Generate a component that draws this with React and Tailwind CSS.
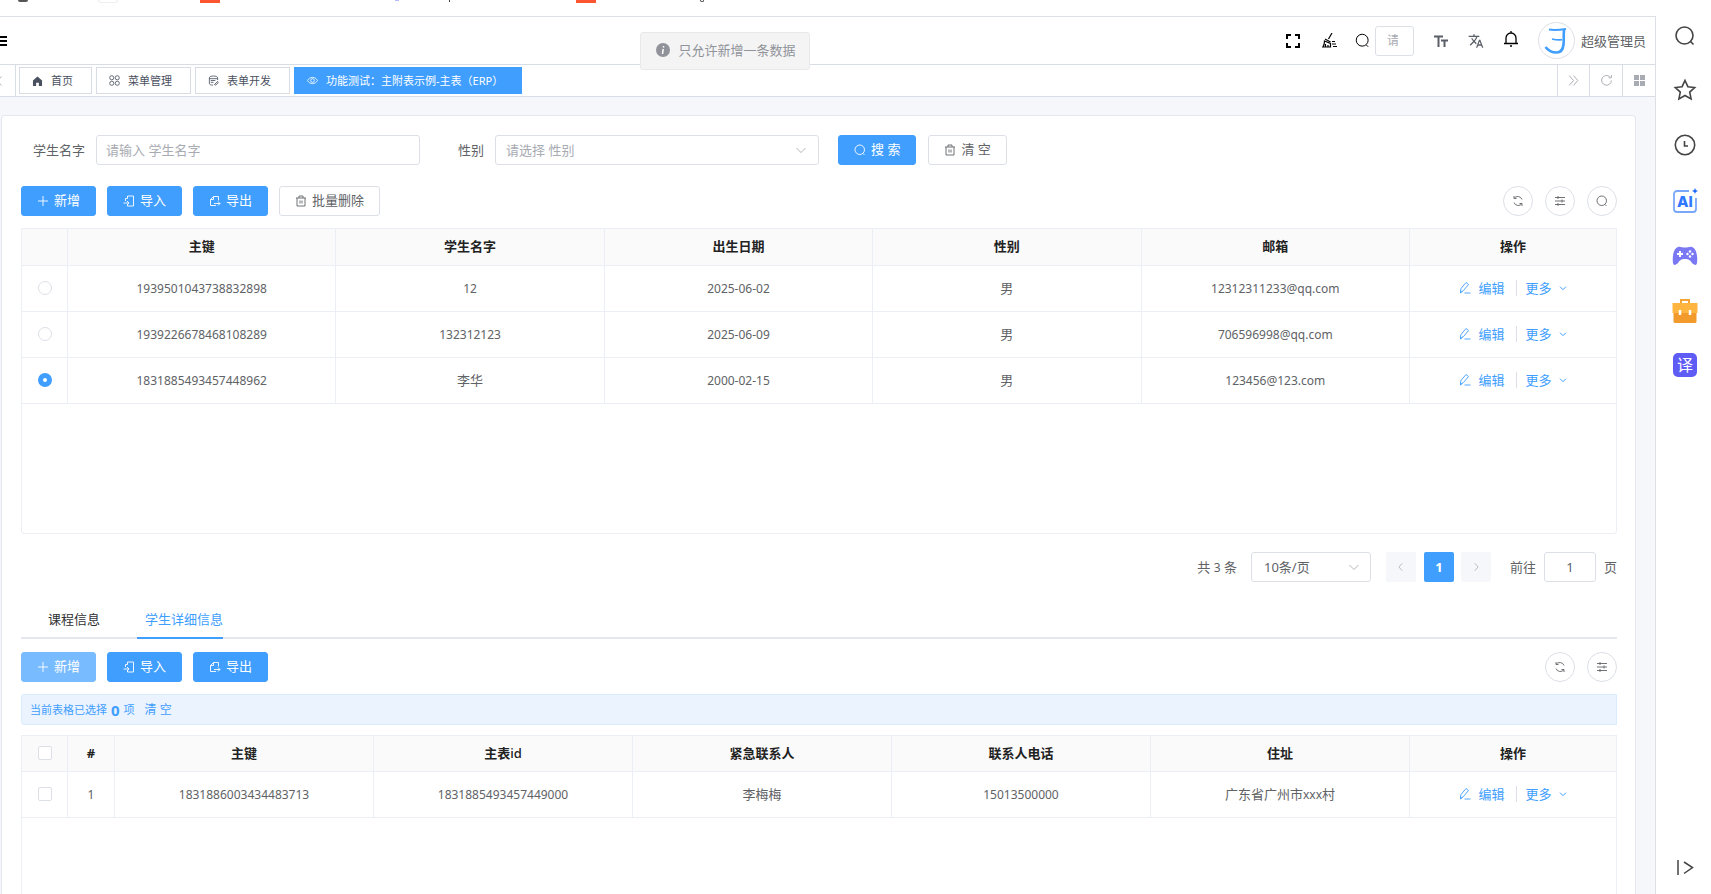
import React, { useState } from "react";

const students = [
  { id: "1939501043738832898", name: "12", birth: "2025-06-02", sex: "男", email: "12312311233@qq.com" },
  { id: "1939226678468108289", name: "132312123", birth: "2025-06-09", sex: "男", email: "706596998@qq.com" },
  { id: "1831885493457448962", name: "李华", birth: "2000-02-15", sex: "男", email: "123456@123.com" },
];

const contacts = [
  { id: "1831886003434483713", mainId: "1831885493457449000", contact: "李梅梅", phone: "15013500000", address: "广东省广州市xxx村" },
];

// element style outline icons, all on a 24 grid
const paths = {
  plus: <path d="M12 2v20M2 12h20" />,
  import: <path d="M9 7V2h12v20H9v-3M1 16h10M8 12l4 4-4 4M9 7H5v5" />,
  export: <path d="M19 11V3H9L3 9v12h11M9 3v6H3M10 17h12M18 13l4 4-4 4" />,
  trash: <path d="M2 6h20M8 6V2h8v4M4 6v16h16V6M10 11v6M14 11v6" />,
  search: <path d="M18 19l3 3M11.500 21a9.500 9.500 0 1 1 0-19 9.500 9.500 0 0 1 0 19z" />,
  refresh: <path d="M20 9a9 9 0 0 0-16-2M4 2v5h5M4 15a9 9 0 0 0 16 2M20 22v-5h-5" />,
  reload: <path d="M21 12a9 9 0 1 1-3-7M21 2v5h-5" />,
  sliders: <path d="M2 5h20M2 12h20M2 19h20M8 2v6M16 9v6M8 16v6" />,
  down: <path d="M3 8l9 9 9-9" />,
  left: <path d="M15 3l-8 9 8 9" />,
  right: <path d="M9 3l8 9-8 9" />,
  double: <path d="M4 3l8 9-8 9M12 3l8 9-8 9" />,
  edit: <path d="M5 19l-2-1 1-5L14 1l5 4L9 17zM3 18v4l4-3M11 22h12" />,
  eye: <path d="M1 12c5-9 17-9 22 0-5 9-17 9-22 0zM12 16a4 4 0 1 0 0-8 4 4 0 0 0 0 8z" />,
  form: <path d="M21 11V6c0-5-18-5-18 0v12c0 3 3 4 8 4M3 8h18M6 12h10M6 16h6M14 21l7-7 1 3-5 5z" />,
  menu: (
    <>
      <circle cx="6" cy="6" r="4.500" />
      <circle cx="18" cy="6" r="4.500" />
      <circle cx="6" cy="18" r="4.500" />
      <circle cx="18" cy="18" r="4.500" />
    </>
  ),
};

function Icon({ name, size = 12, width = 1.8, className = "" }) {
  return (
    <svg width={size} height={size} viewBox="0 0 24 24" fill="none" stroke="currentColor" strokeWidth={width} className={"shrink-0 " + className}>
      {paths[name]}
    </svg>
  );
}

function Button({ icon, children, primary, disabled }) {
  const tone = primary
    ? disabled
      ? "bg-[#79bbff] border-[#79bbff] text-white"
      : "bg-[#409eff] border-[#409eff] text-white"
    : "bg-white border-[#dcdfe6] text-[#606266]";
  return (
    <button disabled={disabled} className={"flex h-[30px] items-center gap-[5px] whitespace-nowrap rounded-[3px] border px-[15px] " + tone}>
      <Icon name={icon} />
      <span className="pb-0.5">{children}</span>
    </button>
  );
}

function RoundButton({ icon, label }) {
  return (
    <button aria-label={label} className="flex size-[30px] items-center justify-center rounded-full border border-[#dcdfe6] text-[#606266]">
      <Icon name={icon} />
    </button>
  );
}

function Th({ children }) {
  return <th className="border-b border-r border-[#ebeef5] pb-0.5 font-bold text-[#222222] last:border-r-0">{children}</th>;
}

function Td({ children }) {
  return <td className="border-b border-r border-[#ebeef5] pb-0.5 last:border-r-0">{children}</td>;
}

// latin and digits run a size smaller than the chinese text
function Num({ children }) {
  return <span className="text-xs">{children}</span>;
}

function Actions() {
  return (
    <div className="flex items-center justify-center text-[#409eff]">
      <button className="flex items-center gap-[7px]">
        <Icon name="edit" />
        编辑
      </button>
      <span className="ml-[11px] mr-[9px] h-4 w-px bg-[#dcdfe6]" />
      <button className="flex items-center gap-[7px]">
        更多
        <Icon name="down" size={8} width={3} />
      </button>
    </div>
  );
}

function TopBar() {
  return (
    <header className="flex h-12 shrink-0 items-center justify-between border-b border-[#d8dce5] bg-white pr-[9px]">
      <button aria-label="菜单" className="flex w-[7px] flex-col gap-[2px]">
        <span className="h-[2px] bg-black" />
        <span className="h-[2px] bg-black" />
        <span className="h-[2px] bg-black" />
      </button>
      <div className="flex items-center text-black">
        <button aria-label="全屏">
          <svg width="14" height="14" viewBox="0 0 14 14" fill="none" stroke="currentColor" strokeWidth="2">
            <path d="M1 5V1h4M9 1h4v4M13 9v4H9M5 13H1V9" />
          </svg>
        </button>
        <button aria-label="清理缓存" className="ml-[22px]">
          <svg width="15" height="15" viewBox="0 0 15 15" fill="none" stroke="currentColor" strokeWidth="1.200">
            <path d="M10 0L6.500 6M3 6l5.500 3" />
            <path d="M2.500 8l6 2.500V14H.8c1.200-1.500 1.700-3.500 1.700-6zM3.500 11v3M6 12v2M10 8.500h3M10 11h4M11 13.500h4" />
          </svg>
        </button>
        <label htmlFor="menu-search" className="ml-[18px]">
          <Icon name="search" size={15} width={1.6} />
        </label>
        <input id="menu-search" placeholder="请输入菜单" className="ml-[5px] h-[30px] w-[39px] rounded-[3px] border border-[#dcdfe6] pl-[11px] pr-[15px] text-xs placeholder:text-[#a8abb2]" />
        <button aria-label="字体大小" className="ml-5 text-[#5a5e66]">
          <svg width="14" height="12" viewBox="0 0 14 12" fill="none" stroke="currentColor" strokeWidth="2">
            <path d="M0 1.500h9M4.500 1.500V12M7 5.500h7M10.500 5.500V12" />
          </svg>
        </button>
        <button aria-label="语言" className="ml-5 text-[#5a5e66]">
          <svg width="16" height="16" viewBox="0 0 24 24" fill="currentColor">
            <path d="M12.870 15.070l-2.540-2.510.03-.03A17.520 17.520 0 0 0 14.070 6H17V4h-7V2H8v2H1v2h11.170C11.500 7.920 10.440 9.750 9 11.350 8.070 10.320 7.300 9.190 6.690 8h-2c.73 1.630 1.730 3.170 2.980 4.560l-5.090 5.020L4 19l5-5 3.110 3.110.76-2.040zM18.500 10h-2L12 22h2l1.120-3h4.750L21 22h2l-4.500-12zm-2.620 7l1.620-4.330L19.120 17h-3.240z" />
          </svg>
        </button>
        <button aria-label="通知" className="ml-5 pb-1">
          <svg width="14" height="16" viewBox="0 0 14 16" fill="none" stroke="currentColor" strokeWidth="1.300">
            <path d="M0 12.500h14M2 12.500V7a5 5 0 0 1 10 0v5.500M7 0v2M6 15h2" />
          </svg>
        </button>
        <button className="ml-5 flex items-center gap-1.5 text-[#606266]">
          <svg width="37" height="37" viewBox="0 0 37 37" fill="none">
            <circle cx="18.500" cy="18.500" r="18" stroke="#dcdfe6" />
            <path d="M11 7.500c5 1 10 .5 17-.5" stroke="#409eff" strokeWidth="2" />
            <path d="M14 17c3 .8 6 1 10 .8" stroke="#409eff" strokeWidth="1.600" />
            <path d="M26 7.500c-.5 6 0 10-.5 15-.5 5-3 8-7 8s-8-1.500-11-5.500" stroke="#409eff" strokeWidth="2.600" />
          </svg>
          超级管理员
        </button>
      </div>
    </header>
  );
}

function PageTab({ icon, active, children }) {
  const tone = active ? "border-[#409eff] bg-[#409eff] text-white pr-[18px]" : "border-[#d8dce5] bg-white text-[#495060] pr-[18px]";
  return (
    <a href="#" className={"flex h-[27px] items-center gap-2 whitespace-nowrap border pl-3 text-[11px] " + tone}>
      {icon}
      {children}
    </a>
  );
}

function TagsBar() {
  return (
    <nav className="flex h-8 shrink-0 items-stretch border-b border-[#d8dce5] bg-white text-[#a8abb2]">
      <button aria-label="向左" className="flex w-4 items-center border-r border-[#d8dce5]">
        <Icon name="left" size={12} className="-ml-1.5" />
      </button>
      <div className="flex flex-1 items-center gap-1 pl-[3px]">
        <PageTab
          icon={
            <svg width="11" height="10" viewBox="0 0 11 11" fill="currentColor">
              <path d="M5.500 0.500L10.500 5v6H7V7.500H4V11H.5V5z" />
            </svg>
          }
        >
          首页
        </PageTab>
        <PageTab icon={<Icon name="menu" size={11} />}>菜单管理</PageTab>
        <PageTab icon={<Icon name="form" size={11} />}>表单开发</PageTab>
        <PageTab icon={<Icon name="eye" size={11} />} active>
          功能测试：主附表示例-主表（ERP）
        </PageTab>
      </div>
      <button aria-label="向右" className="flex w-8 items-center justify-center border-l border-[#d8dce5]">
        <Icon name="double" size={13} />
      </button>
      <button aria-label="刷新" className="flex w-[33px] items-center justify-center border-l border-[#d8dce5]">
        <Icon name="reload" size={13} />
      </button>
      <button aria-label="更多操作" className="flex w-[33px] items-center justify-center border-l border-[#d8dce5]">
        <span className="grid grid-cols-2 gap-px">
          <i className="size-[5px] bg-current" />
          <i className="size-[5px] bg-current" />
          <i className="size-[5px] bg-current" />
          <i className="size-[5px] bg-current" />
        </span>
      </button>
    </nav>
  );
}

function SearchForm() {
  return (
    <form className="flex items-center pl-3" onSubmit={(e) => e.preventDefault()}>
      <label htmlFor="name" className="pr-[11px]">学生名字</label>
      <input id="name" placeholder="请输入 学生名字" className="h-[30px] w-[324px] rounded-[3px] border border-[#dcdfe6] px-[9px] placeholder:text-[#a8abb2]" />
      <label htmlFor="sex" className="pl-[38px] pr-[11px]">性别</label>
      <div className="relative">
        <select id="sex" className="h-[30px] w-[324px] appearance-none rounded-[3px] border border-[#dcdfe6] px-2.5 text-[#a8abb2]">
          <option>请选择 性别</option>
        </select>
        <Icon name="down" className="pointer-events-none absolute right-3 top-[9px] text-[#a8abb2]" />
      </div>
      <div className="ml-[19px] flex gap-3">
        <Button primary icon="search">搜 索</Button>
        <Button icon="trash">清 空</Button>
      </div>
    </form>
  );
}

function StudentTable() {
  const [selected, setSelected] = useState(students[2].id);
  return (
    <div className="mt-3 h-[306px] rounded-b-[3px] border border-[#ebeef5]">
      <table className="w-full table-fixed border-separate border-spacing-0 text-center">
        <colgroup>
          <col className="w-[46px]" />
          <col />
          <col />
          <col />
          <col />
          <col />
          <col className="w-[206px]" />
        </colgroup>
        <thead>
          <tr className="h-[37px] bg-[#fafafa]">
            <Th />
            <Th>主键</Th>
            <Th>学生名字</Th>
            <Th>出生日期</Th>
            <Th>性别</Th>
            <Th>邮箱</Th>
            <Th>操作</Th>
          </tr>
        </thead>
        <tbody>
          {students.map((s) => (
            <tr key={s.id} className="h-[46px]">
              <Td>
                <input
                  type="radio"
                  name="student"
                  aria-label={s.id}
                  checked={selected === s.id}
                  onChange={() => setSelected(s.id)}
                  className="mx-auto block size-[14px] appearance-none rounded-full border border-[#dcdfe6] bg-white checked:border-5 checked:border-[#409eff]"
                />
              </Td>
              <Td><Num>{s.id}</Num></Td>
              <Td>{/^\d+$/.test(s.name) ? <Num>{s.name}</Num> : s.name}</Td>
              <Td><Num>{s.birth}</Num></Td>
              <Td>{s.sex}</Td>
              <Td><Num>{s.email}</Num></Td>
              <Td><Actions /></Td>
            </tr>
          ))}
        </tbody>
      </table>
    </div>
  );
}

function Pagination() {
  return (
    <div className="mt-[18px] flex items-center justify-end">
      <span>共 <Num>3</Num> 条</span>
      <div className="relative ml-[14px]">
        <select aria-label="每页条数" className="h-[30px] w-[120px] appearance-none rounded-[3px] border border-[#dcdfe6] pl-3">
          <option>10条/页</option>
        </select>
        <Icon name="down" className="pointer-events-none absolute right-[11px] top-[9px] text-[#a8abb2]" />
      </div>
      <button disabled aria-label="上一页" className="ml-[15px] flex size-[30px] items-center justify-center rounded-[2px] bg-[#f5f7fa] text-[#a8abb2]">
        <Icon name="left" size={10} />
      </button>
      <button className="ml-2 size-[30px] rounded-[2px] bg-[#409eff] font-bold text-white">1</button>
      <button disabled aria-label="下一页" className="ml-[7px] flex size-[30px] items-center justify-center rounded-[2px] bg-[#f5f7fa] text-[#a8abb2]">
        <Icon name="right" size={10} />
      </button>
      <label htmlFor="page" className="ml-[19px]">前往</label>
      <input id="page" defaultValue="1" className="mx-2 h-[30px] w-[52px] rounded-[3px] border border-[#dcdfe6] text-center" />
      <span>页</span>
    </div>
  );
}

function CheckBox({ label }) {
  return <input type="checkbox" aria-label={label} className="mx-auto block size-[14px] appearance-none rounded-[2px] border border-[#dcdfe6] bg-white checked:bg-[#409eff]" />;
}

function ContactTable() {
  return (
    <div className="mt-2.5 flex-1 border border-b-0 border-[#ebeef5]">
      <table className="w-full table-fixed border-separate border-spacing-0 text-center">
        <colgroup>
          <col className="w-[46px]" />
          <col className="w-[47px]" />
          <col />
          <col />
          <col />
          <col />
          <col />
          <col className="w-[206px]" />
        </colgroup>
        <thead>
          <tr className="h-9 bg-[#fafafa]">
            <Th><CheckBox label="全选" /></Th>
            <Th>#</Th>
            <Th>主键</Th>
            <Th>主表<span className="font-medium">id</span></Th>
            <Th>紧急联系人</Th>
            <Th>联系人电话</Th>
            <Th>住址</Th>
            <Th>操作</Th>
          </tr>
        </thead>
        <tbody>
          {contacts.map((c, i) => (
            <tr key={c.id} className="h-[46px]">
              <Td><CheckBox label={c.id} /></Td>
              <Td><Num>{i + 1}</Num></Td>
              <Td><Num>{c.id}</Num></Td>
              <Td><Num>{c.mainId}</Num></Td>
              <Td>{c.contact}</Td>
              <Td><Num>{c.phone}</Num></Td>
              <Td>广东省广州市<Num>xxx</Num>村</Td>
              <Td><Actions /></Td>
            </tr>
          ))}
        </tbody>
      </table>
    </div>
  );
}

function SideBar() {
  return (
    <aside className="flex w-[55px] shrink-0 flex-col items-center bg-white pl-[3px] pt-[9px] text-[#444444]">
      <button aria-label="搜索">
        <svg width="22" height="22" viewBox="0 0 22 22" fill="none" stroke="currentColor" strokeWidth="1.600">
          <circle cx="10.500" cy="10.500" r="8.500" />
          <path d="M16 16l3.500 3.500" />
        </svg>
      </button>
      <button aria-label="收藏" className="mt-[31px]">
        <svg width="24" height="24" viewBox="0 0 24 24" fill="none" stroke="currentColor" strokeWidth="1.600">
          <path d="M12 2.500l2.900 6.200 6.800.8-5 4.600 1.400 6.800-6.100-3.400-6.100 3.400 1.400-6.800-5-4.600 6.800-.8z" />
        </svg>
      </button>
      <button aria-label="历史" className="mt-8">
        <svg width="22" height="22" viewBox="0 0 22 22" fill="none" stroke="currentColor" strokeWidth="1.600">
          <circle cx="11" cy="11" r="9.700" />
          <path d="M10.500 7v5H14" />
        </svg>
      </button>
      <button aria-label="AI" className="mt-8">
        <svg width="26" height="26" viewBox="0 0 26 26">
          <path d="M17 3H5a3 3 0 0 0-3 3v15a3 3 0 0 0 3 3h16a3 3 0 0 0 3-3V10" fill="none" stroke="#7ba7fb" strokeWidth="1.800" />
          <path d="M23 0l.9 2.100 2.100.9-2.100.9L23 6l-.9-2.100L20 3l2.100-.9z" fill="#1f6bff" />
          <text x="5" y="19" fill="#2f78ff" fontSize="15" fontWeight="800" fontFamily="Inter, sans-serif">AI</text>
        </svg>
      </button>
      <button aria-label="游戏" className="mt-8">
        <svg width="26" height="20" viewBox="0 0 26 20">
          <path d="M6 1c2-1 4 .5 7 .5S18 0 20 1c4 1 6 9 5 16-.5 3-3 2-5 0-2-3-3-4-7-4s-5 1-7 4c-2 2-4.500 3-5 0C0 10 2 2 6 1z" fill="#7a78f2" />
          <path d="M8 5v6M5 8h6" stroke="#fff" strokeWidth="2" />
          <g fill="#fff">
            <circle cx="18" cy="5.500" r="1.200" />
            <circle cx="18" cy="10.500" r="1.200" />
            <circle cx="15.500" cy="8" r="1.200" />
            <circle cx="20.500" cy="8" r="1.200" />
          </g>
        </svg>
      </button>
      <button aria-label="工具" className="mt-8">
        <svg width="26" height="26" viewBox="0 0 26 26">
          <path d="M9 6V2h8v4" fill="none" stroke="#f5a335" strokeWidth="2" />
          <path d="M1.500 13h23v10.500a1.500 1.500 0 0 1-1.500 1.500H3a1.500 1.500 0 0 1-1.500-1.500z" fill="#f39a2c" />
          <path d="M.5 5h25v10H.5z" fill="#ffb53f" />
          <path d="M8 12v5M18 12v5" stroke="#fff" strokeWidth="2.500" />
        </svg>
      </button>
      <button aria-label="翻译" className="mt-[29px] size-6 rounded-[5px] bg-[#5f5cf5] text-base leading-none text-white">译</button>
      <button aria-label="收起" className="mb-[18px] mt-auto">
        <svg width="17" height="16" viewBox="0 0 17 16" fill="none" stroke="currentColor" strokeWidth="1.500">
          <path d="M1 0v15M7 2l8.500 5.500L7 13.500" />
        </svg>
      </button>
    </aside>
  );
}

export default function App() {
  return (
    <div className="flex h-screen flex-col overflow-hidden bg-white font-['Noto_Sans','Noto_Sans_CJK_SC',sans-serif] text-[13px] leading-5 text-[#606266]">
      {/* browser bookmarks strip, only its lower edge is in view */}
      <div className="relative h-4 shrink-0">
        <span className="absolute left-[18px] top-0 h-[2px] w-[10px] rounded-b-full bg-[#555555]" />
        <span className="absolute left-[98px] top-0 h-[3px] w-5 rounded-b border border-t-0 border-[#eeeeee]" />
        <span className="absolute left-[200px] top-0 h-[3px] w-5 bg-[#fc5531]" />
        <span className="absolute left-[395px] top-0 h-px w-1 bg-[#b3b9ff]" />
        <span className="absolute left-[449px] top-0 h-[2px] w-px bg-[#444444]" />
        <span className="absolute left-[576px] top-0 h-[3px] w-5 bg-[#fc5531]" />
        <span className="absolute left-[700px] top-0 h-[2px] w-1 rounded-b-full border border-t-0 border-[#444444]" />
      </div>
      <div className="flex min-h-0 flex-1">
        <div className="flex min-w-0 flex-1 flex-col border-r border-t border-[#dcdfe3] bg-[#f5f7fa]">
          <TopBar />
          <TagsBar />
          <main className="ml-[1px] mr-[19px] mt-[18px] flex min-h-0 flex-1 flex-col rounded-t-[4px] border border-b-0 border-[#e4e7ed] bg-white pl-[19px] pr-[18px] pt-[19px]">
            <SearchForm />
            <div className="mt-[21px] flex items-center gap-[11px]">
              <Button primary icon="plus">新增</Button>
              <Button primary icon="import">导入</Button>
              <Button primary icon="export">导出</Button>
              <Button icon="trash">批量删除</Button>
              <div className="ml-auto flex gap-3">
                <RoundButton icon="refresh" label="刷新" />
                <RoundButton icon="sliders" label="列设置" />
                <RoundButton icon="search" label="显示搜索" />
              </div>
            </div>
            <StudentTable />
            <Pagination />
            <div role="tablist" className="mt-[19px] flex gap-6 border-b-2 border-[#e4e7ed] pl-[14px]">
              <button role="tab" className="h-9 px-[13px] text-[#303133]">课程信息</button>
              <button role="tab" aria-selected="true" className="-mb-[2px] h-[38px] border-b-2 border-[#409eff] pl-2 text-[#409eff]">学生详细信息</button>
            </div>
            <div className="mt-[13px] flex items-center gap-[11px]">
              <Button primary disabled icon="plus">新增</Button>
              <Button primary icon="import">导入</Button>
              <Button primary icon="export">导出</Button>
              <div className="ml-auto flex gap-3">
                <RoundButton icon="refresh" label="刷新" />
                <RoundButton icon="sliders" label="列设置" />
              </div>
            </div>
            <div className="mt-3 flex h-[31px] items-center rounded-l-[3px] border border-[#d9ecff] bg-[#ebf3ff] pl-2 text-[11px] text-[#409eff]">
              当前表格已选择
              <b className="mx-1 text-[15px]">0</b>
              项
              <button className="ml-2.5 text-xs">清 空</button>
            </div>
            <ContactTable />
          </main>
        </div>
        <SideBar />
      </div>
      <div role="alert" className="absolute left-1/2 top-8 flex h-[38px] w-[170px] -translate-x-[216px] items-center gap-[9px] rounded-[3px] border border-[#e9e9eb] bg-[#f4f4f5] pb-0.5 pl-[15px] text-[#909399]">
        <svg width="14" height="14" viewBox="0 0 14 14">
          <circle cx="7" cy="7" r="7" fill="#909399" />
          <path d="M7.500 3v1.600M7.200 6L6.500 11" stroke="#fff" strokeWidth="1.500" />
        </svg>
        只允许新增一条数据
      </div>
    </div>
  );
}
